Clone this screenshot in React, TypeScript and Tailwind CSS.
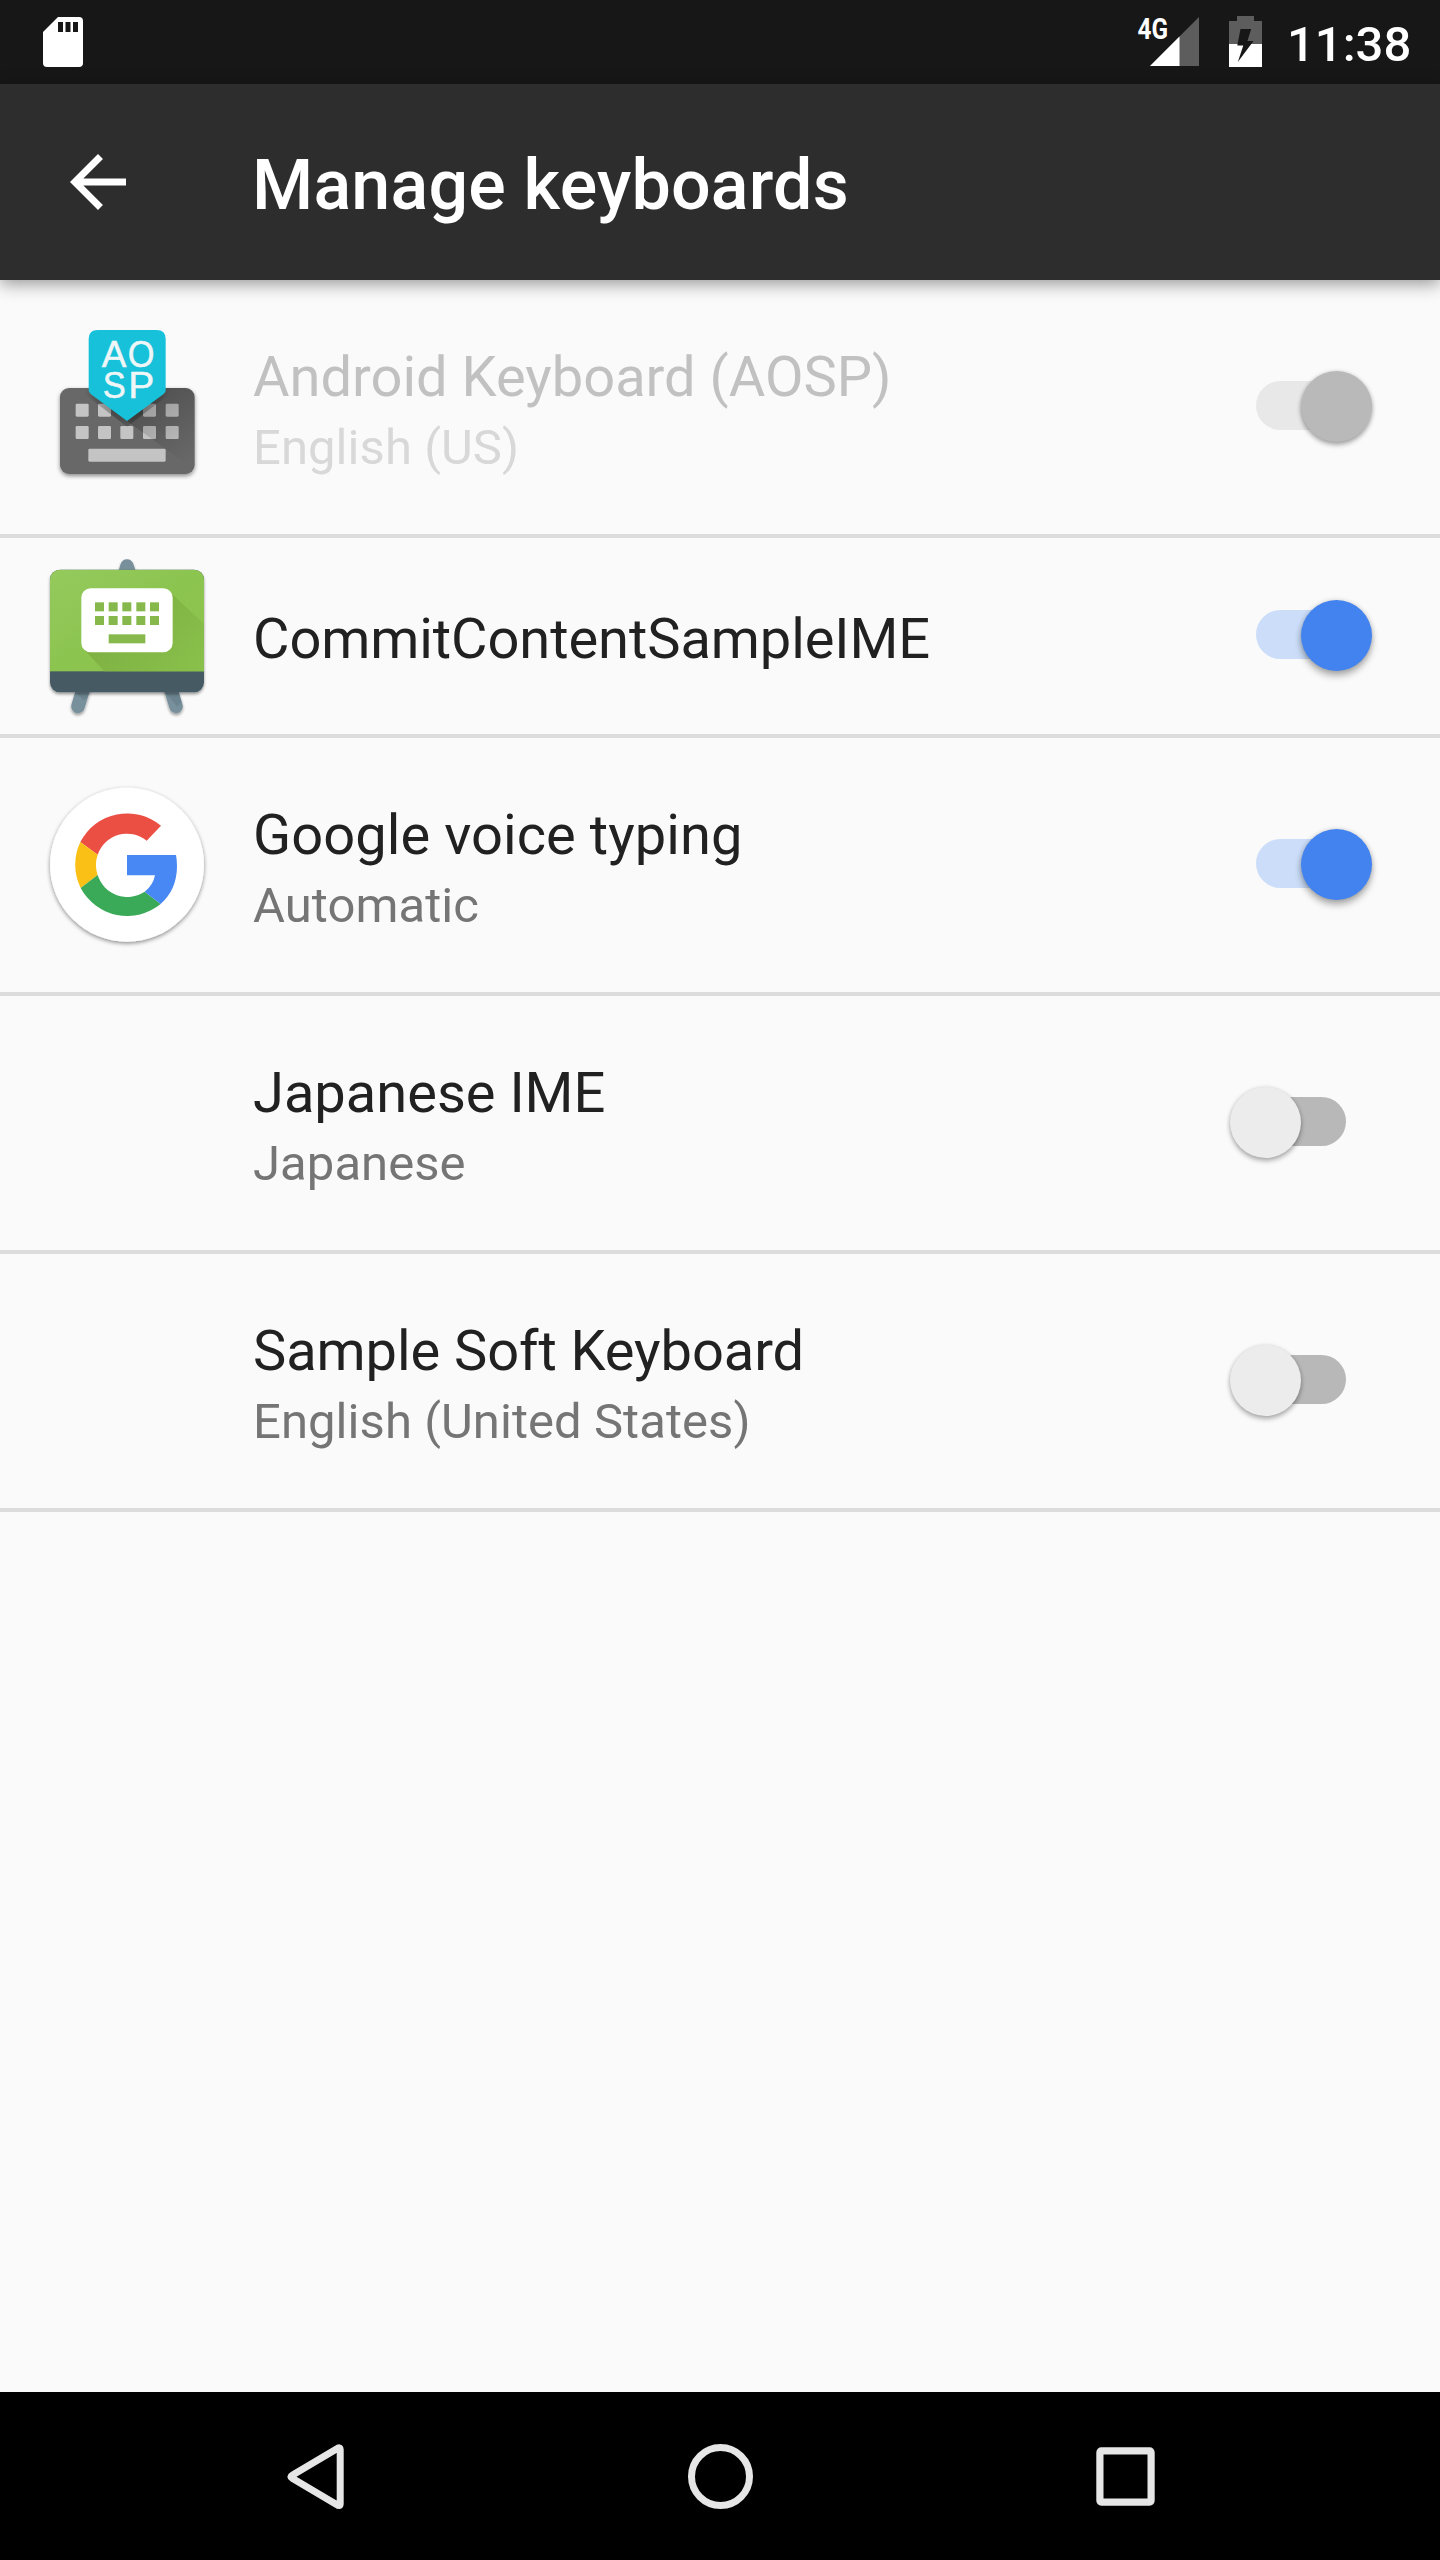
import type { ReactNode } from "react";

type SwitchState = "on" | "off" | "disabled";

const TRACK: Record<SwitchState, string> = {
  on: "bg-[#cbddf8]",
  off: "bg-[#b8b8b8]",
  disabled: "bg-[#e8e8e8]",
};

const THUMB: Record<SwitchState, string> = {
  on: "bg-[#4283ef] shadow-[0_5px_7px_rgba(0,0,0,0.3),0_0_5px_rgba(0,0,0,0.15)]",
  off: "bg-[#ececec] shadow-[0_3px_5px_rgba(0,0,0,0.3),0_0_4px_rgba(0,0,0,0.1)]",
  disabled: "bg-[#b9b9b9] shadow-[0_3px_5px_rgba(0,0,0,0.32),0_0_4px_rgba(0,0,0,0.12)]",
};

function Switch({ state }: { state: SwitchState }) {
  return (
    <div
      className={`relative mb-px flex h-[71px] w-[142px] shrink-0 items-center ${
        state === "off" ? "justify-start" : "justify-end"
      }`}
    >
      <div className={`absolute left-[26px] top-[10px] h-[49px] w-[90px] rounded-full ${TRACK[state]}`} />
      <div className={`relative size-[71px] rounded-full ${THUMB[state]}`} />
    </div>
  );
}

function AospIcon() {
  const top = [107, 174, 309, 377];
  const bottom = [107, 174, 241, 309, 377];
  return (
    <svg width="180" height="190" viewBox="0 6 540 570">
      <defs>
        <filter id="aospShadow" x="-10%" y="-10%" width="120%" height="130%">
          <feDropShadow dx="0" dy="6" stdDeviation="6" floodOpacity="0.45" />
        </filter>
        <linearGradient id="aospFade" gradientUnits="userSpaceOnUse" x1="300" y1="270" x2="440" y2="460">
          <stop offset="0" stopOpacity="0.22" />
          <stop offset="1" stopOpacity="0" />
        </linearGradient>
        <radialGradient id="badgeGlow" gradientUnits="userSpaceOnUse" cx="261" cy="255" r="130">
          <stop offset="0.5" stopOpacity="0.3" />
          <stop offset="1" stopOpacity="0" />
        </radialGradient>
        <clipPath id="aospBody">
          <rect x="60" y="234" width="404" height="258" rx="27" />
        </clipPath>
      </defs>
      <rect x="60" y="234" width="404" height="258" rx="27" fill="#686868" filter="url(#aospShadow)" />
      <g fill="#c4c4c4">
        {top.map((x) => (
          <rect key={x} x={x} y="281" width="39" height="39" rx="4" />
        ))}
        {bottom.map((x) => (
          <rect key={x} x={x} y="348" width="39" height="39" rx="4" />
        ))}
        <rect x="145" y="416" width="232" height="39" rx="4" />
      </g>
      <g clipPath="url(#aospBody)">
        <path d="M261 333L377 246V234H464V480Z" fill="url(#aospFade)" />
        <path d="M130 250L261 350L392 250V234H130Z" fill="url(#badgeGlow)" />
      </g>
      <path d="M146 87Q146 60 173 60H350Q377 60 377 87V240Q377 248 370 253L261 333L153 253Q146 248 146 240Z" fill="#17c1da" />
      <g fill="#eef6f7" stroke="#eef6f7" strokeWidth="1.5" fontFamily="Liberation Sans, Arial, sans-serif" fontSize="110">
        <text x="185" y="172" textLength="74" lengthAdjust="spacingAndGlyphs">A</text>
        <text x="263" y="172" textLength="80" lengthAdjust="spacingAndGlyphs">O</text>
        <text x="188" y="263" textLength="69" lengthAdjust="spacingAndGlyphs">S</text>
        <text x="265" y="263" textLength="78" lengthAdjust="spacingAndGlyphs">P</text>
      </g>
    </svg>
  );
}

function EaselIcon() {
  const cols = [165, 206, 247, 289, 330];
  return (
    <svg width="180" height="184" viewBox="0 -4 540 552">
      <defs>
        <filter id="easelShadow" x="-10%" y="-10%" width="120%" height="130%">
          <feDropShadow dx="0" dy="6" stdDeviation="5" floodOpacity="0.4" />
        </filter>
        <linearGradient id="easelGreen" x1="0" y1="0" x2="1" y2="1">
          <stop offset="0" stopColor="#95ca5d" />
          <stop offset="0.5" stopColor="#8cc450" />
          <stop offset="1" stopColor="#8bc34a" />
        </linearGradient>
        <linearGradient id="easelCast" gradientUnits="userSpaceOnUse" x1="260" y1="220" x2="450" y2="400">
          <stop offset="0" stopColor="#7fb243" />
          <stop offset="1" stopColor="#89c04b" />
        </linearGradient>
        <clipPath id="easelBoard">
          <rect x="30" y="73" width="462" height="368" rx="30" />
        </clipPath>
      </defs>
      <g filter="url(#easelShadow)">
        <path d="M236 76L241 58Q247 42 261 42Q275 42 281 58L287 76Z" fill="#78909c" />
        <g stroke="#78909c" strokeWidth="41" strokeLinecap="round">
          <path d="M130 430L114 483" />
          <path d="M392 430L408 483" />
        </g>
      </g>
      <path d="M106 440L130 464L141 460L148 440ZM374 440L412 484L424 470L415 440Z" fill="#5e7581" opacity="0.45" />
      <rect x="30" y="73" width="462" height="368" rx="30" fill="#455a64" filter="url(#easelShadow)" />
      <g clipPath="url(#easelBoard)">
        <rect x="30" y="72" width="462" height="306" fill="url(#easelGreen)" />
        <path d="M389 139L492 236V378H193L133 313Z" fill="url(#easelCast)" />
      </g>
      <rect x="124" y="129" width="274" height="192" rx="28" fill="#fff" />
      <g fill="#86b84b">
        {cols.map((x) => (
          <rect key={x} x={x} y="171" width="27" height="27" />
        ))}
        {cols.map((x) => (
          <rect key={x} x={x} y="212" width="27" height="27" />
        ))}
        <rect x="206" y="267" width="110" height="27" />
      </g>
    </svg>
  );
}

function GoogleIcon() {
  return (
    <svg width="180" height="180" viewBox="0 0 540 540">
      <defs>
        <filter id="googleShadow" x="-10%" y="-10%" width="120%" height="120%">
          <feDropShadow dx="0" dy="5" stdDeviation="6" floodOpacity="0.45" />
        </filter>
      </defs>
      <circle cx="261" cy="269" r="231" fill="#fff" filter="url(#googleShadow)" />
      <path d="M121 201A158 158 0 0 1 363 152L320 197A93 93 0 0 0 173 239Z" fill="#eb4f43" />
      <path d="M121 201A158 158 0 0 0 122 339L173 300A93 93 0 0 1 173 239Z" fill="#fbc016" />
      <path d="M122 339A158 158 0 0 0 362 387L314 350A93 93 0 0 1 173 300Z" fill="#3aaa58" />
      <path d="M261 240H408Q411 256 411 273C411 321 394 359 362 387L314 350Q339 332 345 301H261Z" fill="#4788f4" />
    </svg>
  );
}

interface Keyboard {
  name: string;
  detail?: string;
  icon?: ReactNode;
  state: SwitchState;
  tracking?: string;
}

const KEYBOARDS: Keyboard[] = [
  { name: "Android Keyboard (AOSP)", detail: "English (US)", icon: <AospIcon />, state: "disabled" },
  { name: "CommitContentSampleIME", icon: <EaselIcon />, state: "on", tracking: "tracking-[-0.07px]" },
  { name: "Google voice typing", detail: "Automatic", icon: <GoogleIcon />, state: "on", tracking: "tracking-[0.07px]" },
  { name: "Japanese IME", detail: "Japanese", state: "off" },
  { name: "Sample Soft Keyboard", detail: "English (United States)", state: "off", tracking: "tracking-[-0.07px]" },
];

function KeyboardRow({ name, detail, icon, state, tracking = "" }: Keyboard) {
  const disabled = state === "disabled";
  return (
    <li className={`flex items-center border-b-4 border-[#dcdcdc] pl-10 pr-[68px] ${detail ? "h-[258px]" : "h-[200px]"}`}>
      <div className="w-[213px] shrink-0">{icon}</div>
      <div className="flex-1 whitespace-nowrap">
        <div
          className={`text-[56px] leading-[68px] ${tracking} ${disabled ? "text-[#c1c1c1]" : "text-[#212121]"} ${
            detail ? "pt-[10px]" : "pt-[6px]"
          }`}
        >
          {name}
        </div>
        {detail && (
          <div
            className={`pt-[3px] text-[49px] leading-[67px] tracking-[0.06px] ${disabled ? "text-[#d8d8d8]" : "text-[#757575]"}`}
          >
            {detail}
          </div>
        )}
      </div>
      <Switch state={state} />
    </li>
  );
}

function StatusBar() {
  return (
    <div className="flex h-[84px] items-start bg-[#171717] pl-[43px]">
      <svg className="mt-[17px]" width="40" height="50" viewBox="0 0 40 50">
        <path d="M15 0H36Q40 0 40 4V46Q40 50 36 50H4Q0 50 0 46V15Z" fill="#fff" />
        <path d="M15 5H20V15H15ZM22.5 5H27.5V15H22.5ZM30 5H35V15H30Z" fill="#171717" />
      </svg>
      <svg className="ml-auto mt-[8px]" width="66" height="59" viewBox="1134 8 66 59">
        <path d="M1199 17V66H1150Z" fill="#5d5d5d" />
        <path d="M1179.5 36.5V66H1150Z" fill="#fff" />
        <text x="1137.5" y="39" fill="#fff" fontFamily="Roboto, sans-serif" fontWeight="700" fontSize="29" textLength="30.5" lengthAdjust="spacingAndGlyphs">
          4G
        </text>
      </svg>
      <svg className="ml-[29px] mt-[16px]" width="33" height="51" viewBox="1229 16 33 51">
        <path d="M1237 16H1254V21H1262V44H1229V21H1237Z" fill="#5d5d5d" />
        <path d="M1229 44H1262V67H1229Z" fill="#fff" />
        <path d="M1240.5 29H1251.2L1247.4 41H1253.5L1237.8 62L1243.3 45.5H1237.3Z" fill="#171717" />
      </svg>
      <span className="ml-[25px] mt-[16px] w-[153px] text-[49px] font-medium leading-[57px] text-white">11:38</span>
    </div>
  );
}

function AppBar() {
  return (
    <header className="relative flex h-[196px] items-center bg-[#2d2d2d] pl-14 shadow-[0_4px_16px_rgba(0,0,0,0.4)]">
      <svg width="84" height="84" viewBox="0 0 24 24" fill="#fff">
        <path d="M20 11H7.83l5.59-5.59L12 4l-8 8 8 8 1.41-1.41L7.83 13H20z" />
      </svg>
      <h1 className="ml-[112px] pt-[6px] text-[70px] font-medium leading-[82px] tracking-[0.2px] text-white">
        Manage keyboards
      </h1>
    </header>
  );
}

function NavBar() {
  return (
    <nav className="flex h-[168px] items-center bg-black pl-[280px] text-[#e6e6e6]">
      <svg width="72" height="72" viewBox="0 0 72 72" fill="none" stroke="currentColor" strokeWidth="7" strokeLinejoin="round">
        <path d="M60.2 9.7V63.7Q60 67 56.5 64.4L12.2 38.2Q9.5 36.7 12.2 35.2L56.5 9Q60 6.4 60.2 9.7Z" />
      </svg>
      <svg className="ml-[332px]" width="73" height="72" viewBox="0 0 73 72" fill="none" stroke="currentColor" strokeWidth="7">
        <circle cx="36.5" cy="36.5" r="29" />
      </svg>
      <svg className="ml-[332px]" width="72" height="72" viewBox="0 0 72 72" fill="none" stroke="currentColor" strokeWidth="7.2">
        <rect x="10.9" y="10.9" width="51.2" height="51.2" rx="1.5" />
      </svg>
    </nav>
  );
}

export default function App() {
  return (
    <div className="flex h-[2560px] w-[1440px] flex-col overflow-hidden bg-[#fafafa] font-[Roboto,sans-serif]">
      <StatusBar />
      <AppBar />
      <ul className="flex-1">
        {KEYBOARDS.map((keyboard) => (
          <KeyboardRow key={keyboard.name} {...keyboard} />
        ))}
      </ul>
      <NavBar />
    </div>
  );
}
